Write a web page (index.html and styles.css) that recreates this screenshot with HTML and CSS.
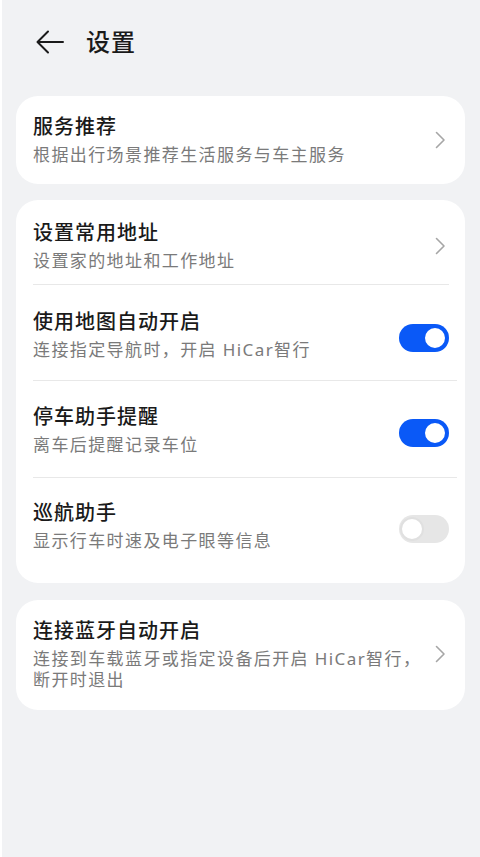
FILE: index.html
```html
<!DOCTYPE html>
<html lang="zh-CN">
<head>
  <meta charset="UTF-8">
  <title>设置</title>
  <meta name="viewport" content="width=device-width, initial-scale=1.0"/>
  <link rel="stylesheet" href="styles.css">
</head>
<body>
  <div class="page">
    <div class="header">
      <svg class="back" width="28" height="24" viewBox="0 0 28 24">
        <path d="M27 12H2M12 1.5L1.5 12L12 22.5" fill="none" stroke="#1a1a1a" stroke-width="2" stroke-linecap="round" stroke-linejoin="round"/>
      </svg>
      <h1>设置</h1>
    </div>

    <div class="card single">
      <div class="row">
        <div class="text">
          <div class="title">服务推荐</div>
          <div class="desc">根据出行场景推荐生活服务与车主服务</div>
        </div>
        <svg class="chev" width="11" height="18" viewBox="0 0 11 18"><path d="M1.5 1.5L9 9L1.5 16.5" fill="none" stroke="#a6a6a6" stroke-width="1.6" stroke-linecap="round" stroke-linejoin="round"/></svg>
      </div>
    </div>

    <div class="card list">
      <div class="row first">
        <div class="text">
          <div class="title">设置常用地址</div>
          <div class="desc">设置家的地址和工作地址</div>
        </div>
        <svg class="chev" width="11" height="18" viewBox="0 0 11 18"><path d="M1.5 1.5L9 9L1.5 16.5" fill="none" stroke="#a6a6a6" stroke-width="1.6" stroke-linecap="round" stroke-linejoin="round"/></svg>
      </div>
      <div class="row">
        <div class="text">
          <div class="title">使用地图自动开启</div>
          <div class="desc">连接指定导航时，开启 HiCar智行</div>
        </div>
        <div class="switch on"><span class="knob"></span></div>
      </div>
      <div class="row tall">
        <div class="text">
          <div class="title">停车助手提醒</div>
          <div class="desc">离车后提醒记录车位</div>
        </div>
        <div class="switch on"><span class="knob"></span></div>
      </div>
      <div class="row last">
        <div class="text">
          <div class="title">巡航助手</div>
          <div class="desc">显示行车时速及电子眼等信息</div>
        </div>
        <div class="switch"><span class="knob"></span></div>
      </div>
    </div>

    <div class="card single bt">
      <div class="row">
        <div class="text wrap">
          <div class="title">连接蓝牙自动开启</div>
          <div class="desc">连接到车载蓝牙或指定设备后开启 HiCar智行，断开时退出</div>
        </div>
        <svg class="chev" width="11" height="18" viewBox="0 0 11 18"><path d="M1.5 1.5L9 9L1.5 16.5" fill="none" stroke="#a6a6a6" stroke-width="1.6" stroke-linecap="round" stroke-linejoin="round"/></svg>
      </div>
    </div>
  </div>
</body>
</html>
```

FILE: styles.css
```css
body { margin: 0; background: #f1f2f4; font-family: "Noto Sans", "Noto Sans CJK SC", sans-serif; color: #1a1a1a; }
.page { min-height: 857px; border-left: 2px solid #fff; padding: 0 15px 0 14px; box-sizing: border-box; }

.header { display: flex; align-items: center; height: 84px; padding-left: 20px; }
.header .back { margin-right: 22px; }
.header h1 { margin: 0; font-size: 24px; font-weight: 500; letter-spacing: 1px; line-height: 30px; }

.card { background: #fff; border-radius: 22px; margin-top: 12px; padding: 0 16px 0 17px; }
.card + .card { margin-top: 16px; }
.card.bt { margin-top: 17px; }
.row { display: flex; align-items: center; justify-content: space-between; }
.single .row { padding: 18px 0; }
.bt .row { padding: 18px 0 20px; }

.list { padding-right: 8px; }
.list .row { padding: 24px 8px 19px 0; border-bottom: 1px solid #e8e8e8; }
.list .row.first { padding: 20px 0 12px; margin-right: 8px; }
.list .row.tall { padding: 23px 8px 21px 0; }
.list .row.last { border-bottom: none; padding: 22px 8px 31px 0; }

.text { display: flex; flex-direction: column; gap: 4px; }
.text.wrap { width: 402px; }
.title { font-size: 20px; font-weight: 500; line-height: 26px; letter-spacing: 1px; }
.desc { font-size: 17px; line-height: 22px; color: #7a7a7a; letter-spacing: 1.4px; }
.bt .desc { line-height: 21px; }

.chev { margin-right: 3px; flex-shrink: 0; }

.switch { position: relative; width: 50px; height: 28px; border-radius: 14px; background: #e6e6e6; flex-shrink: 0; margin-top: 6px; }
.switch .knob { position: absolute; top: 2px; left: 1px; width: 20px; height: 20px; border-radius: 50%; background: #fff; border: 2px solid #e0e0e0; }
.switch.on { background: #0a59f7; }
.switch.on .knob { left: auto; right: 2px; border-color: #0a59f7; }
```
